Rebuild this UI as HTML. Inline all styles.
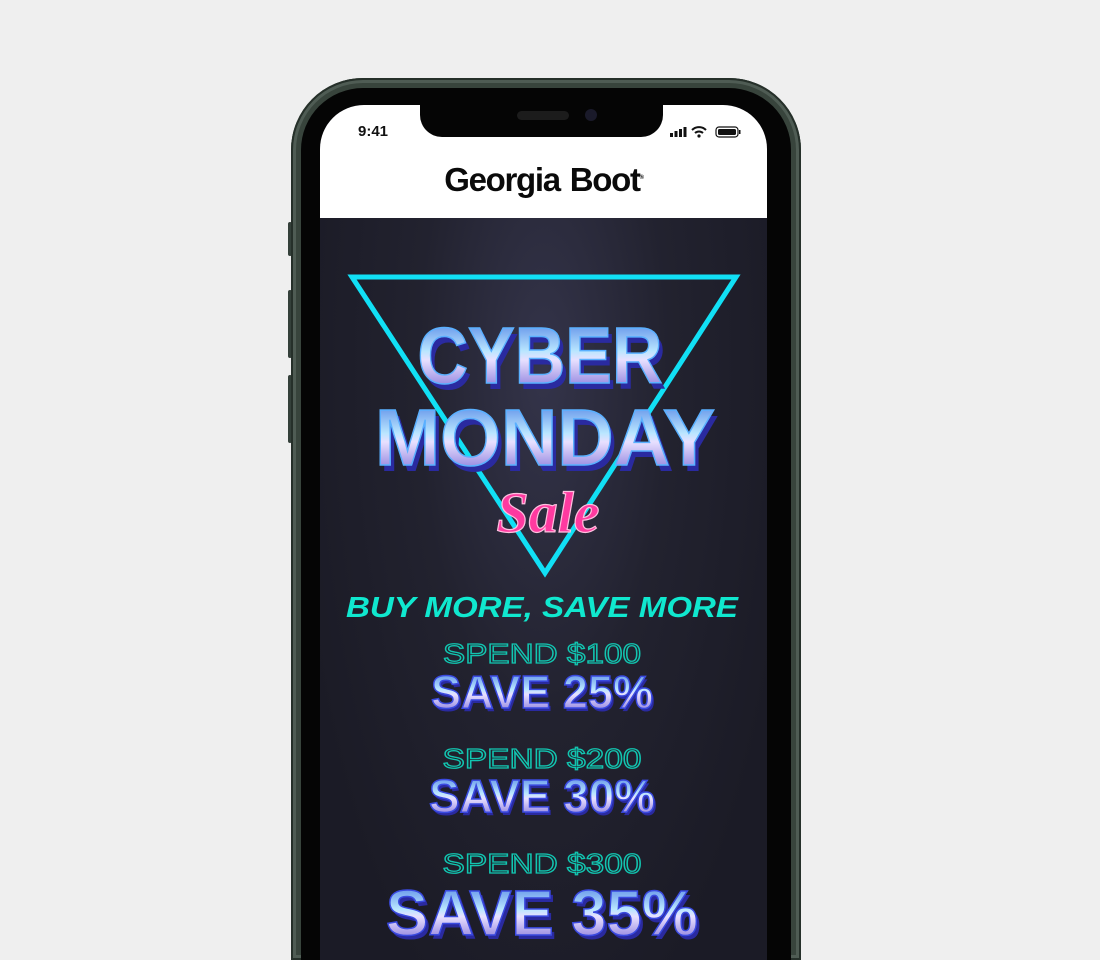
<!DOCTYPE html>
<html><head><meta charset="utf-8"><style>
html,body{margin:0;padding:0;background:#efefef;width:1100px;height:960px;overflow:hidden;font-family:"Liberation Sans",sans-serif;position:relative}
.frame{position:absolute;left:291px;top:78px;width:510px;height:882px;border-radius:72px 72px 0 0;background:#38443c;box-shadow:inset 0 0 0 2px #26302a,inset 0 0 0 5px #4f5c54}
.bezel{position:absolute;left:301px;top:88px;width:490px;height:872px;border-radius:62px 62px 0 0;background:#050505}
.screen{position:absolute;left:320px;top:105px;width:447px;height:855px;border-radius:44px 44px 0 0;overflow:hidden;background:#1d1d2b}
.btn{position:absolute;background:#34403a;width:4px;border-radius:2px}
</style></head><body>
<div class="btn" style="left:288px;top:222px;height:34px"></div>
<div class="btn" style="left:288px;top:290px;height:68px"></div>
<div class="btn" style="left:288px;top:375px;height:68px"></div>
<div class="btn" style="left:797px;top:312px;height:105px"></div>
<div class="frame"></div>
<div class="bezel"></div>
<div class="screen">
<div style="position:absolute;left:0;top:0;width:447px;height:113px;background:#fff"></div>
<div style="position:absolute;left:38px;top:18px;font-size:15px;font-weight:bold;color:#111">9:41</div>
<svg style="position:absolute;left:350px;top:20px" width="75" height="14" viewBox="0 0 75 14">
<rect x="0" y="8" width="3" height="4" fill="#111"/><rect x="4.5" y="6" width="3" height="6" fill="#111"/><rect x="9" y="4" width="3" height="8" fill="#111"/><rect x="13.5" y="2" width="3" height="10" fill="#111"/>
<path d="M22 5a10 10 0 0 1 14 0M25 8a6 6 0 0 1 8 0" stroke="#111" stroke-width="2" fill="none"/><circle cx="29" cy="11" r="1.6" fill="#111"/>
<rect x="46" y="2" width="22" height="10" rx="3" fill="none" stroke="#111" stroke-width="1.2"/><rect x="48" y="4" width="18" height="6" rx="1.5" fill="#111"/><rect x="69" y="5" width="1.5" height="4" fill="#111"/>
</svg>
<div style="position:absolute;left:100px;top:-2px;width:243px;height:34px;background:#050505;border-radius:0 0 22px 22px"></div>
<div style="position:absolute;left:197px;top:6px;width:52px;height:9px;background:#1c1c1c;border-radius:5px"></div>
<div style="position:absolute;left:265px;top:4px;width:12px;height:12px;background:#1a1a2a;border-radius:50%"></div>
<div style="position:absolute;left:0;top:56px;width:447px;text-align:center;font-size:33px;font-weight:bold;letter-spacing:-1.3px;word-spacing:2px;color:#0a0a0a">Georgia Boot<sup style="font-size:6px">®</sup></div>
<div style="position:absolute;left:0;top:113px;width:447px;height:770px;background:radial-gradient(ellipse at 50% 20%,#34344a 0%,#22222f 40%,#1b1b26 80%)"></div>
<svg style="position:absolute;left:0;top:113px" width="447" height="770" viewBox="0 0 447 770">
<defs>
<linearGradient id="ch" x1="0" y1="0" x2="0" y2="1"><stop offset="0" stop-color="#3f6fe0"/><stop offset="0.45" stop-color="#b9e6ff"/><stop offset="0.55" stop-color="#e8e0ff"/><stop offset="1" stop-color="#6a5ad0"/></linearGradient>
</defs>
<polygon points="32,59 416,59 225,355" fill="none" stroke="#11e0f5" stroke-width="5"/>
<g font-family="Liberation Sans,sans-serif" font-weight="bold" text-anchor="middle">
<text x="224" y="171" font-size="80" fill="#2a2aa0" textLength="245" lengthAdjust="spacingAndGlyphs">CYBER</text>
<text x="220" y="165" font-size="80" fill="url(#ch)" stroke="#5ab0ff" stroke-width="1.5" textLength="245" lengthAdjust="spacingAndGlyphs">CYBER</text>
<text x="229" y="253" font-size="80" fill="#2a2aa0" textLength="340" lengthAdjust="spacingAndGlyphs">MONDAY</text>
<text x="225" y="247" font-size="80" fill="url(#ch)" stroke="#5ab0ff" stroke-width="1.5" textLength="340" lengthAdjust="spacingAndGlyphs">MONDAY</text>
<text x="228" y="314" font-size="58" font-style="italic" font-family="Liberation Serif,serif" fill="#ff3aa0" stroke="#ffc0e0" stroke-width="1.2">Sale</text>
<text x="222" y="399" font-size="29" font-style="italic" fill="#10e8cf" textLength="392" lengthAdjust="spacingAndGlyphs">BUY MORE, SAVE MORE</text>
<g fill="none" stroke="#12c5b0" stroke-width="1.3" font-size="28" font-weight="normal">
<text x="222" y="445" textLength="198" lengthAdjust="spacingAndGlyphs">SPEND $100</text>
<text x="222" y="550" textLength="199" lengthAdjust="spacingAndGlyphs">SPEND $200</text>
<text x="222" y="655" textLength="199" lengthAdjust="spacingAndGlyphs">SPEND $300</text>
</g>
<g font-size="46">
<text x="224" y="493" fill="#2a2aa0" textLength="222" lengthAdjust="spacingAndGlyphs">SAVE  25%</text>
<text x="222" y="490" fill="url(#ch)" stroke="#3a4ae0" stroke-width="1.5" textLength="222" lengthAdjust="spacingAndGlyphs">SAVE  25%</text>
<text x="224" y="597" fill="#2a2aa0" textLength="226" lengthAdjust="spacingAndGlyphs">SAVE  30%</text>
<text x="222" y="594" fill="url(#ch)" stroke="#3a4ae0" stroke-width="1.5" textLength="226" lengthAdjust="spacingAndGlyphs">SAVE  30%</text>
<text x="225" y="721" font-size="64" fill="#2a2aa0" textLength="312" lengthAdjust="spacingAndGlyphs">SAVE  35%</text>
<text x="222" y="717" font-size="64" fill="url(#ch)" stroke="#3a4ae0" stroke-width="1.5" textLength="312" lengthAdjust="spacingAndGlyphs">SAVE  35%</text>
</g>
</g>
</svg>
</div>
</body></html>
